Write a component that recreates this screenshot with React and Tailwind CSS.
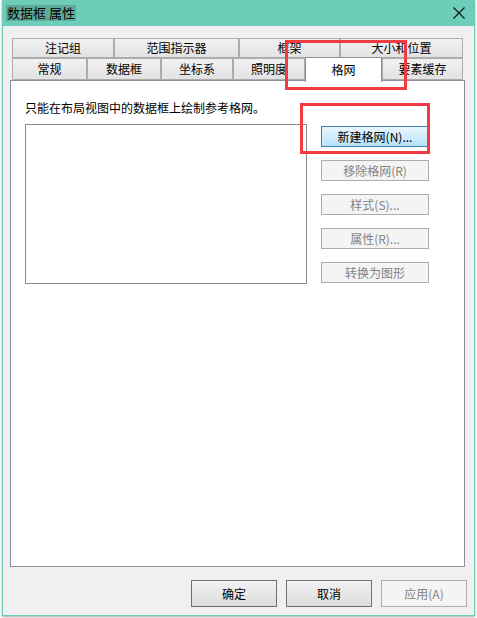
import React from 'react';

const topTabs = [
  { label: '注记组', w: 'w-[102px]' },
  { label: '范围指示器', w: 'w-[125px]' },
  { label: '框架', w: 'w-[101px]' },
  { label: '大小和位置', w: 'w-[123px]' },
];

const frontTabs = [
  { label: '常规', w: 'w-[75px]' },
  { label: '数据框', w: 'w-[74px]' },
  { label: '坐标系', w: 'w-[72px]' },
  { label: '照明度', w: 'w-[72px]' },
  { label: '格网', w: 'w-[77px]', active: true },
  { label: '要素缓存', w: 'w-[81px]' },
];

const sideButtons = ['移除格网(R)', '样式(S)...', '属性(R)...', '转换为图形'];

function Tab({ label, w, active }) {
  if (active) {
    return (
      <div
        className={`${w} h-[25px] -mt-[1px] -mb-[2px] relative z-10 bg-white border border-b-0 border-[#8f8e9e] flex items-center justify-center text-[12px] leading-none`}
      >
        {label}
      </div>
    );
  }
  return (
    <div
      className={`${w} h-full border border-[#acacac] bg-gradient-to-b from-[#f2f2f2] to-[#e2e2e2] flex items-center justify-center text-[12px] leading-none`}
    >
      {label}
    </div>
  );
}

export default function App() {
  return (
    <div
      className="w-[477px] h-[618px] bg-white relative overflow-hidden px-[2px] text-black"
      style={{ fontFamily: '"Noto Sans CJK SC", "Liberation Sans", sans-serif' }}
    >
      <div className="h-[616px] flex flex-col border-x border-b border-[#6ccdb8] shadow-[0_1px_2px_rgba(0,0,0,0.35)]">
        {/* title bar */}
        <div className="h-[26px] shrink-0 bg-[#6ccdb8] flex items-center justify-between pl-[3px] pr-[9px]">
          <span className="bg-[#5eab99] h-[16px] px-[1px] flex items-center text-[13px] leading-none -mt-[1px]">
            数据框 属性
          </span>
          <svg width="12" height="12" viewBox="0 0 12 12" className="-mt-[1px]">
            <path d="M0.5 0.5 L11.5 11.5 M11.5 0.5 L0.5 11.5" stroke="#111" strokeWidth="1.1" />
          </svg>
        </div>

        {/* body */}
        <div className="flex-1 bg-[#f0f0f0] flex flex-col pl-[7px] pr-[9px]">
          <div className="mt-[12px] pl-[2px] flex h-[20px]">
            {topTabs.map((t) => (
              <Tab key={t.label} {...t} />
            ))}
          </div>
          <div className="pl-[2px] flex h-[22px] items-start">
            {frontTabs.map((t) => (
              <Tab key={t.label} {...t} />
            ))}
          </div>

          {/* panel */}
          <div className="h-[487px] bg-white border border-[#8f8e9e] px-[14px] pt-[19px]">
            <div className="text-[12px] leading-[16px]">只能在布局视图中的数据框上绘制参考格网。</div>
            <div className="flex mt-[8px]">
              <div className="w-[282px] h-[160px] border border-[#8a8a8a] bg-white" />
              <div className="ml-[14px] pt-[2px] flex flex-col gap-[13px]">
                <button className="w-[108px] h-[21px] border border-[#3c7fb1] bg-gradient-to-b from-[#eaf6fd] to-[#b7e2fb] text-[12px] leading-none flex items-center justify-center">
                  新建格网(N)...
                </button>
                {sideButtons.map((b) => (
                  <button
                    key={b}
                    className="w-[108px] h-[21px] border border-[#adadad] bg-[#f4f4f4] text-[#838383] text-[12px] leading-none flex items-center justify-center"
                  >
                    {b}
                  </button>
                ))}
              </div>
            </div>
          </div>

          {/* dialog buttons */}
          <div className="mt-[13px] flex justify-end gap-[9px] -mr-[2px]">
            <button className="w-[86px] h-[27px] border border-[#707070] bg-gradient-to-b from-[#f2f2f2] to-[#dcdcdc] text-[12px] leading-none flex items-center justify-center">
              确定
            </button>
            <button className="w-[86px] h-[27px] border border-[#707070] bg-gradient-to-b from-[#f2f2f2] to-[#dcdcdc] text-[12px] leading-none flex items-center justify-center">
              取消
            </button>
            <button className="w-[86px] h-[27px] border border-[#adadad] bg-[#f4f4f4] text-[#838383] text-[12px] leading-none flex items-center justify-center">
              应用(A)
            </button>
          </div>
        </div>
      </div>

      {/* red annotation boxes */}
      <div className="absolute left-[285px] top-[40px] w-[122px] h-[50px] border-[3px] border-[#ef3b41] z-20" />
      <div className="absolute left-[300px] top-[103px] w-[130px] h-[51px] border-[3px] border-[#ef3b41] z-20" />
    </div>
  );
}
